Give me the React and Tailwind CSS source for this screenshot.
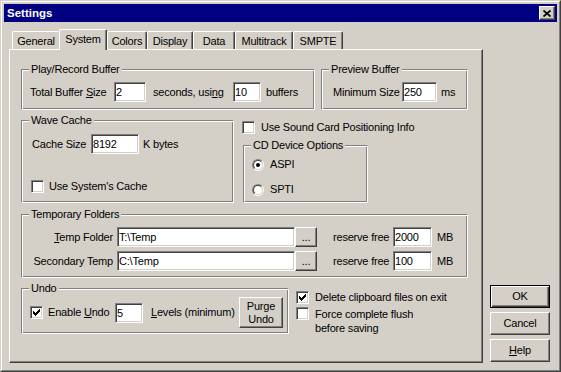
import React from 'react';

const TABS = [
  { label: 'General', w: 'w-[47px]' },
  { label: 'System', w: 'w-[48px]', active: true },
  { label: 'Colors', w: 'w-[40px]' },
  { label: 'Display', w: 'w-[46px]' },
  { label: 'Data', w: 'w-[42px]' },
  { label: 'Multitrack', w: 'w-[58px]' },
  { label: 'SMPTE', w: 'w-[50px]' },
];

const raised = 'border border-t-white border-l-white border-r-[#404040] border-b-[#404040] shadow-[inset_-1px_-1px_0_#808080]';
const sunken = 'border border-t-[#808080] border-l-[#808080] border-r-white border-b-white shadow-[inset_1px_1px_0_#404040,inset_-1px_-1px_0_#d4d0c8]';
const etched = 'border border-t-[#808080] border-l-[#808080] border-r-white border-b-white shadow-[inset_1px_1px_0_#fff,inset_-1px_-1px_0_#808080]';

function Group({ title, className, children }) {
  return (
    <div className={`relative ${etched} ${className}`}>
      <span className="absolute -top-[7px] left-[7px] px-[2px] bg-[#d4d0c8] leading-[13px]">{title}</span>
      {children}
    </div>
  );
}

function Edit({ value, w }) {
  return (
    <input
      readOnly
      defaultValue={value}
      className={`${sunken} ${w} h-[20px] bg-white pl-[1px] outline-none text-[11px] leading-[13px]`}
    />
  );
}

function Check({ checked }) {
  return (
    <span className={`${sunken} w-[13px] h-[13px] bg-white shrink-0 flex items-center justify-center`}>
      {checked && (
        <svg width="7" height="7" viewBox="0 0 7 7" shapeRendering="crispEdges">
          <polygon points="0,2 2,4 7,-1 7,2 2,7 0,5" fill="#000" />
        </svg>
      )}
    </span>
  );
}

function Radio({ checked }) {
  return (
    <span className="w-[12px] h-[12px] rounded-full border border-t-[#808080] border-l-[#808080] border-r-white border-b-white shrink-0 flex">
      <span className="flex-1 rounded-full border border-t-[#404040] border-l-[#404040] border-r-[#d4d0c8] border-b-[#d4d0c8] bg-white flex items-center justify-center">
        {checked && <span className="w-[4px] h-[4px] rounded-full bg-black" />}
      </span>
    </span>
  );
}

function Button({ children, className, isDefault }) {
  const frame = isDefault
    ? 'border border-black shadow-[inset_1px_1px_0_#fff,inset_-1px_-1px_0_#404040,inset_-2px_-2px_0_#808080]'
    : raised;
  return (
    <button type="button" className={`${frame} bg-[#d4d0c8] flex items-center justify-center text-center leading-[13px] ${className}`}>
      {children}
    </button>
  );
}

export default function App() {
  return (
    <div className="w-[561px] h-[372px] bg-[#d4d0c8] border border-t-[#d4d0c8] border-l-[#d4d0c8] border-r-[#404040] border-b-[#404040] font-['Liberation_Sans',Arial,sans-serif] text-[11px] leading-[13px] text-black tracking-[-0.2px] select-none">
      <div className="h-full border border-t-white border-l-white border-r-[#808080] border-b-[#808080] p-[2px] flex flex-col">
        {/* title bar */}
        <div className="h-[18px] bg-[#000080] flex items-center pl-[3px] pr-[2px]">
          <span className="text-white font-bold text-[11.5px] tracking-normal">Settings</span>
          <button type="button" className={`ml-auto w-[16px] h-[14px] bg-[#d4d0c8] ${raised} flex items-center justify-center`}>
            <svg width="8" height="7" viewBox="0 0 8 7">
              <path d="M0.5 0.5 L7.5 6.5 M7.5 0.5 L0.5 6.5" stroke="#000" strokeWidth="1.7" />
            </svg>
          </button>
        </div>

        <div className="flex mt-[7px] ml-[5px]">
          {/* tab control */}
          <div className="w-[474px] flex flex-col">
            <div className="h-[20px] flex items-end pl-[3px] relative z-10">
              {TABS.map((t, i) => {
                const beforeActive = TABS[i + 1]?.active;
                if (t.active) {
                  return (
                    <div key={t.label} className={`${t.w} h-[21px] -mb-[1px] bg-[#d4d0c8] border-t border-l border-t-white border-l-white border-r border-r-[#404040] shadow-[inset_-1px_0_0_#808080] rounded-t-[2px] flex justify-center pt-[3px]`}>
                      {t.label}
                    </div>
                  );
                }
                return (
                  <div key={t.label} className={`${t.w} h-[18px] border-t border-l border-t-white border-l-white ${beforeActive ? '' : 'border-r border-r-[#404040] shadow-[inset_-1px_0_0_#808080]'} rounded-t-[2px] flex justify-center pt-[3px]`}>
                    {t.label}
                  </div>
                );
              })}
            </div>

            <div className="h-[314px] border border-t-white border-l-white border-r-[#404040] border-b-[#404040] shadow-[inset_-1px_-1px_0_#808080] pl-[11px] pt-[19px] flex flex-col">
              {/* row 1 */}
              <div className="flex">
                <Group title="Play/Record Buffer" className="w-[294px] h-[41px] pt-[12px] pl-[8px]">
                  <div className="flex items-center h-[20px]">
                    <span className="w-[84px]">Total Buffer <u>S</u>ize</span>
                    <Edit value="2" w="w-[32px]" />
                    <span className="ml-[7px] w-[80px]">seconds, usi<u>n</u>g</span>
                    <Edit value="10" w="w-[28px]" />
                    <span className="ml-[5px]">buffers</span>
                  </div>
                </Group>
                <Group title="Preview Buffer" className="ml-[6px] w-[147px] h-[41px] pt-[12px] pl-[11px]">
                  <div className="flex items-center h-[20px]">
                    <span className="w-[69px]">Minimum Size</span>
                    <Edit value="250" w="w-[35px]" />
                    <span className="ml-[4px]">ms</span>
                  </div>
                </Group>
              </div>

              {/* row 2 */}
              <div className="flex mt-[10px]">
                <Group title="Wave Cache" className="w-[213px] h-[83px] pt-[13px] pl-[10px]">
                  <div className="flex items-center h-[20px]">
                    <span className="w-[59px]">Cache Size</span>
                    <Edit value="8192" w="w-[48px]" />
                    <span className="ml-[4px]">K bytes</span>
                  </div>
                  <label className="flex items-center mt-[26px] -ml-[1px]">
                    <Check />
                    <span className="ml-[5px]">Use System's Cache</span>
                  </label>
                </Group>
                <div className="ml-[8px] pt-[1px] flex flex-col">
                  <label className="flex items-center">
                    <Check />
                    <span className="ml-[6px]">Use Sound Card Positioning Info</span>
                  </label>
                  <Group title="CD Device Options" className="ml-[1px] mt-[11px] w-[125px] h-[58px] pt-[12px] pl-[8px]">
                    <label className="flex items-center">
                      <Radio checked />
                      <span className="ml-[6px]">ASPI</span>
                    </label>
                    <label className="flex items-center mt-[12px]">
                      <Radio />
                      <span className="ml-[6px]">SPTI</span>
                    </label>
                  </Group>
                </div>
              </div>

              {/* row 3 */}
              <Group title="Temporary Folders" className="mt-[11px] w-[447px] h-[64px] pt-[12px]">
                <div className="flex items-center h-[20px]">
                  <span className="w-[95px] text-right pr-[4px]"><u>T</u>emp Folder</span>
                  <Edit value="T:\Temp" w="w-[178px]" />
                  <Button className="w-[22px] h-[20px]">...</Button>
                  <span className="ml-[16px] w-[60px]">reserve free</span>
                  <Edit value="2000" w="w-[39px]" />
                  <span className="ml-[5px]">MB</span>
                </div>
                <div className="flex items-center h-[20px] mt-[4px]">
                  <span className="w-[95px] text-right pr-[4px]">Secondary Temp</span>
                  <Edit value="C:\Temp" w="w-[178px]" />
                  <Button className="w-[22px] h-[20px]">...</Button>
                  <span className="ml-[16px] w-[60px]">reserve free</span>
                  <Edit value="100" w="w-[39px]" />
                  <span className="ml-[5px]">MB</span>
                </div>
              </Group>

              {/* row 4 */}
              <div className="flex mt-[10px]">
                <Group title="Undo" className="w-[268px] h-[46px] pt-[8px] pl-[8px]">
                  <div className="flex items-center h-[31px]">
                    <Check checked />
                    <span className="ml-[5px] w-[67px]">Enable <u>U</u>ndo</span>
                    <Edit value="5" w="w-[28px]" />
                    <span className="ml-[8px] w-[88px]"><u>L</u>evels (minimum)</span>
                    <Button className="w-[44px] h-[31px]">Purge<br />Undo</Button>
                  </div>
                </Group>
                <div className="ml-[7px] pt-[3px] flex flex-col">
                  <label className="flex items-center">
                    <Check checked />
                    <span className="ml-[6px]">Delete clipboard files on exit</span>
                  </label>
                  <label className="flex items-start mt-[3px]">
                    <Check />
                    <span className="ml-[6px] leading-[14px]">Force complete flush<br />before saving</span>
                  </label>
                </div>
              </div>
            </div>
          </div>

          {/* dialog buttons */}
          <div className="ml-[7px] w-[60px] flex flex-col justify-end gap-[4px] pb-[1px]">
            <Button isDefault className="w-[60px] h-[23px]">OK</Button>
            <Button className="w-[60px] h-[23px]">Cancel</Button>
            <Button className="w-[60px] h-[23px]"><span><u>H</u>elp</span></Button>
          </div>
        </div>
      </div>
    </div>
  );
}
